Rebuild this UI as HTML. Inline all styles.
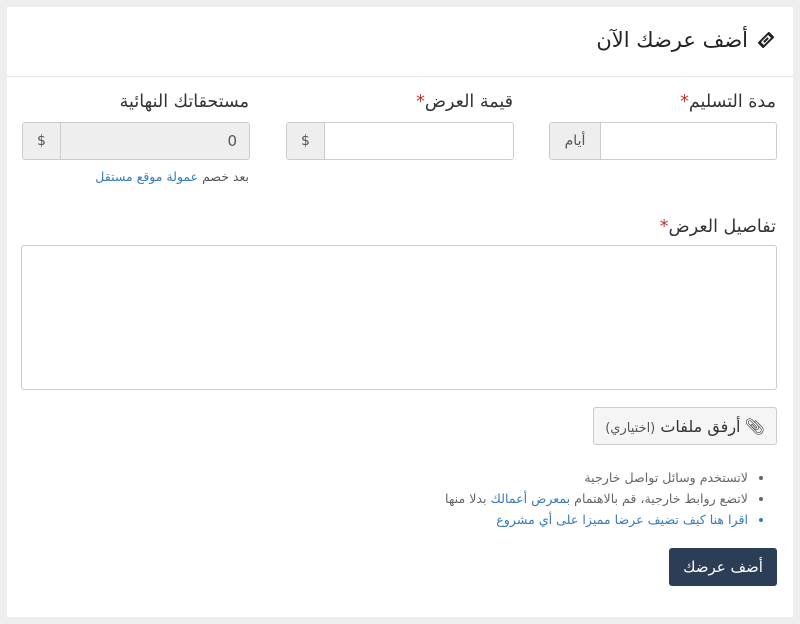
<!DOCTYPE html>
<html dir="rtl"><head><meta charset="utf-8"><style>
*{box-sizing:border-box;margin:0;padding:0}
body{width:800px;height:624px;background:#eeeeee;font-family:"DejaVu Sans","Liberation Sans",sans-serif;color:#333;position:relative;overflow:hidden}
.p{position:absolute;left:7px;top:7px;width:786px;height:610px;background:#fff}
.a{position:absolute}
.lbl{font-size:17.5px;color:#333;text-align:right;white-space:nowrap}
.st{color:#c9302c}
.in{position:absolute;height:38px;border:1px solid #ccc;border-radius:3px;background:#fff;overflow:hidden}
.ad{position:absolute;left:0;top:0;bottom:0;background:#eee;border-right:1px solid #ccc;font-size:14px;color:#555;display:flex;align-items:center;justify-content:center}
.blue{color:#3a7ab8}
ul li{font-size:12.6px;color:#666;height:21px;line-height:21px;white-space:nowrap}
</style></head><body>
<div class="p"></div>
<div class="a" style="right:24px;top:28px;font-size:21px;color:#222;display:flex;align-items:center;gap:8px">
<svg width="20" height="20" viewBox="0 0 20 20"><g transform="rotate(-45 10 10)"><rect x="2" y="6" width="16" height="8" rx="1" fill="#222"/><rect x="5" y="8" width="10" height="4" fill="#fff"/><rect x="7" y="9" width="6" height="2" fill="#222"/></g></svg>
<span>أضف عرضك الآن</span></div>
<div class="a" style="left:7px;width:786px;top:76px;height:1px;background:#e5e5e5"></div>

<div class="a lbl" style="right:24px;top:92px">مدة التسليم<span class="st">*</span></div>
<div class="a lbl" style="right:287px;top:92px">قيمة العرض<span class="st">*</span></div>
<div class="a lbl" style="right:551px;top:92px">مستحقاتك النهائية</div>

<div class="in" style="left:549px;top:122px;width:228px"><div class="ad" style="width:51px">أيام</div></div>
<div class="in" style="left:286px;top:122px;width:228px"><div class="ad" style="width:38px">$</div></div>
<div class="in" style="left:22px;top:122px;width:228px;background:#eee"><div class="ad" style="width:38px">$</div><div class="a" style="right:12px;top:9px;font-size:15px;color:#555">0</div></div>

<div class="a" style="right:551px;top:169px;font-size:12.5px;color:#555;white-space:nowrap">بعد خصم <span class="blue">عمولة موقع مستقل</span></div>

<div class="a lbl" style="right:24px;top:217px">تفاصيل العرض<span class="st">*</span></div>
<div class="a" style="left:21px;top:245px;width:756px;height:145px;border:1px solid #ccc;border-radius:3px"></div>

<div class="a" style="left:593px;top:407px;width:184px;height:38px;border:1px solid #ccc;border-radius:3px;background:#f5f5f5;display:flex;align-items:center;justify-content:center;gap:4px;font-size:16px;color:#333;white-space:nowrap">
<span>📎︎</span><span>أرفق ملفات <span style="font-size:13px;color:#555">(اختياري)</span></span></div>

<ul class="a" style="right:30px;top:467px;list-style:disc;padding-right:22px">
<li>لاتستخدم وسائل تواصل خارجية</li>
<li>لاتضع روابط خارجية، قم بالاهتمام <span class="blue">بمعرض أعمالك</span> بدلا منها</li>
<li class="blue">اقرا هنا كيف تضيف عرضا مميزا على أي مشروع</li>
</ul>

<div class="a" style="left:669px;top:548px;width:108px;height:38px;background:#2c3e55;border-radius:3px;color:#fff;font-size:15px;display:flex;align-items:center;justify-content:center">أضف عرضك</div>
</body></html>
